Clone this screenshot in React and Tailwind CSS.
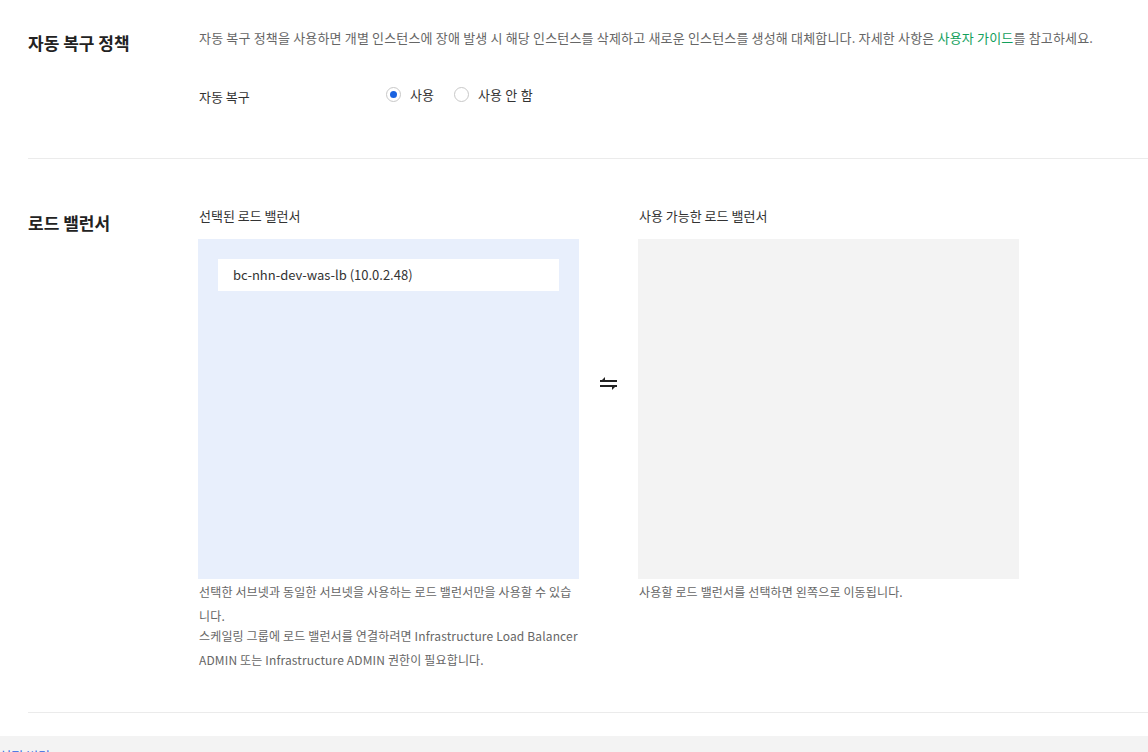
export default function App() {
  return (
    <div className="h-[752px] w-full overflow-hidden bg-white font-['Noto_Sans_CJK_KR','Noto_Sans',sans-serif] text-[#222]">
      {/* 자동 복구 정책 */}
      <section className="flex pt-[28px] pb-[51px] pl-[28px]">
        <h2 className="w-[171px] shrink-0 pt-[3px] text-[17px] font-bold leading-[24px] text-[#222]">자동 복구 정책</h2>
        <div>
          <p className="text-[13px] leading-[20px] tracking-[0.17px] text-[#666]">
            자동 복구 정책을 사용하면 개별 인스턴스에 장애 발생 시 해당 인스턴스를 삭제하고 새로운 인스턴스를 생성해 대체합니다. 자세한 사항은{' '}
            <a className="text-[#12a05c]">사용자 가이드</a>를 참고하세요.
          </p>
          <div className="mt-[34px] flex items-center">
            <span className="w-[187px] pt-[5px] text-[13px] leading-[20px] text-[#333]">자동 복구</span>
            <label className="flex items-center gap-[9px]">
              <span className="flex h-[15px] w-[15px] items-center justify-center rounded-full border border-[#c8c8c8] bg-white">
                <span className="h-[7px] w-[7px] rounded-full bg-[#1a62e0]"></span>
              </span>
              <span className="text-[13px] leading-[20px] text-[#333]">사용</span>
            </label>
            <label className="ml-[20px] flex items-center gap-[9px]">
              <span className="h-[15px] w-[15px] rounded-full border border-[#c8c8c8] bg-white"></span>
              <span className="text-[13px] leading-[20px] tracking-[0.2px] text-[#333]">사용 안 함</span>
            </label>
          </div>
        </div>
      </section>

      <div className="ml-[28px] border-t border-[#ebebeb]"></div>

      {/* 로드 밸런서 */}
      <section className="flex pt-[47px] pb-[40px] pl-[28px]">
        <h2 className="w-[171px] shrink-0 pt-[5px] text-[17px] font-bold leading-[24px] text-[#222]">로드 밸런서</h2>
        <div className="flex">
          <div className="w-[380px]">
            <div className="text-[13px] leading-[20px] text-[#333]">선택된 로드 밸런서</div>
            <div className="mt-[13px] -ml-[1px] h-[340px] bg-[#e8effc] p-[20px]">
              <div className="flex h-[32px] items-center bg-white px-[15px] text-[13px] text-[#333]">
                bc-nhn-dev-was-lb (10.0.2.48)
              </div>
            </div>
            <div className="mt-[1px] text-[12px] leading-[24px] tracking-[0.15px] text-[#666]">
              <p>선택한 서브넷과 동일한 서브넷을 사용하는 로드 밸런서만을 사용할 수 있습니다.</p>
              <p className="-mt-[4px]">스케일링 그룹에 로드 밸런서를 연결하려면 Infrastructure Load Balancer ADMIN 또는 Infrastructure ADMIN 권한이 필요합니다.</p>
            </div>
          </div>

          <div className="flex w-[60px] justify-center pt-[169px] pr-[2px]">
            <svg width="19" height="17" viewBox="0 0 19 17">
              <rect x="1" y="5" width="17" height="2" fill="#222" />
              <polygon points="1,7 6,2 6,7" fill="#222" />
              <rect x="1" y="10" width="17" height="2" fill="#222" />
              <polygon points="18,10 13,15 13,10" fill="#222" />
            </svg>
          </div>

          <div className="w-[380px]">
            <div className="text-[13px] leading-[20px] text-[#333]">사용 가능한 로드 밸런서</div>
            <div className="mt-[13px] -ml-[1px] h-[340px] bg-[#f3f3f3]"></div>
            <p className="mt-[1px] text-[12px] leading-[24px] tracking-[0.15px] text-[#666]">사용할 로드 밸런서를 선택하면 왼쪽으로 이동됩니다.</p>
          </div>
        </div>
      </section>

      <div className="ml-[28px] border-t border-[#ebebeb]"></div>

      <div className="mt-[23px] h-[40px] bg-[#f3f3f3] pt-[6px]">
        <span className="-ml-[8px] text-[13px] leading-[20px] text-[#2f5fe0]">• 설정 변경</span>
      </div>
    </div>
  );
}
